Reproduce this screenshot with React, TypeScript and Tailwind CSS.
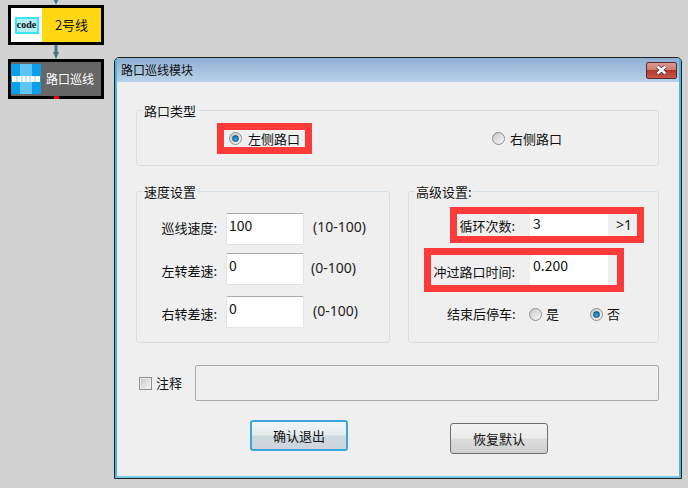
import React from "react";

const zh = { fontFamily: '"Noto Sans CJK SC", sans-serif' };

function Radio({ on }: { on?: boolean }) {
  return (
    <span className="flex h-[13px] w-[13px] shrink-0 items-center justify-center rounded-full border border-[#8f8f8f] bg-[linear-gradient(135deg,#c8c8c8,#f8f8f8)]">
      {on && <span className="h-[7px] w-[7px] rounded-full border border-[#0f4f78] bg-[radial-gradient(circle_at_50%_65%,#35b4ea,#0a5c92)]" />}
    </span>
  );
}

function Field({ v, cls }: { v: string; cls: string }) {
  return (
    <div className={`rounded-[2px] border border-[#dfe3e9] border-t-[#ababab] bg-white pl-[2px] text-[14px] leading-[22px] text-[#111] ${cls}`}>
      {v}
    </div>
  );
}

function Group({ title, cls, children }: { title: string; cls: string; children: React.ReactNode }) {
  return (
    <div className={`relative rounded-[3px] border border-[#d5dfe5] ${cls}`}>
      <span className="absolute left-[6px] top-[-8px] bg-[#efefef] px-[1px] text-[13px] leading-[16px] text-[#111]">{title}</span>
      {children}
    </div>
  );
}

function Arrow({ h }: { h: number }) {
  return (
    <svg width="10" height={h} viewBox={`0 0 10 ${h}`} className="ml-[43px] block">
      <rect x="3.5" y="0" width="3" height={h - 5} fill="#42797f" />
      <path d={`M2 ${h - 7} L8 ${h - 7} L5 ${h} Z`} fill="#42797f" />
    </svg>
  );
}

export default function App() {
  return (
    <div className="relative h-[488px] w-[688px] overflow-hidden bg-[#d1d1d1]" style={zh}>
      <div className="flex w-[96px] translate-x-[8px] flex-col">
        <Arrow h={5} />
        <div className="flex h-[40px] border-[3px] border-black">
          <div className="flex w-[31px] items-center justify-center bg-white">
            <span className="flex h-[17px] w-[24px] items-center justify-center border-2 border-[#35e6f5] bg-[#b4eef2] text-[10px] font-bold leading-none text-[#111]" style={{ fontFamily: '"Liberation Serif", serif' }}>
              code
            </span>
          </div>
          <div className="flex flex-1 items-center justify-center bg-[#ffd713] text-[13px] text-[#111]">2号线</div>
        </div>
        <Arrow h={14} />
        <div className="relative flex h-[40px] items-center border-[3px] border-black bg-[#666666]">
          <svg width="30" height="30" viewBox="0 0 30 30" className="shrink-0">
            <rect width="30" height="30" fill="#0a9fe8" />
            <rect x="9" width="12" height="30" fill="#5cc5f3" />
            <rect x="1" y="12" width="28" height="6" fill="#ffffff" />
            <path d="M6 12v6M11 12v6M15 12v6M19 12v6M24 12v6" stroke="#8fd6f6" strokeWidth="1" />
          </svg>
          <span className="ml-[5px] whitespace-nowrap text-[12px] text-white">路口巡线</span>
          <span className="absolute bottom-[-3px] left-[43px] h-[3px] w-[5px] bg-[#f00000]" />
        </div>
      </div>

      <div className="absolute left-[114px] top-[57px] h-[422px] w-[568px] rounded-t-[5px] border border-[#222]">
        <div className="flex h-full flex-col rounded-t-[4px] border-x-2 border-b-2 border-x-[#46b6e2] border-b-[#7cc4e4]">
          <div className="flex h-[24px] items-center justify-between bg-[linear-gradient(180deg,#8fafd2,#b9d1ea)] pl-[4px] pr-[2px]">
            <span className="text-[12px] text-[#111]">路口巡线模块</span>
            <span className="flex h-[17px] w-[31px] items-center justify-center rounded-[2px] border border-[#5a2a30] bg-[linear-gradient(180deg,#dc9a90_0%,#cf7a6e_45%,#b5392b_50%,#c4584a_100%)]">
              <svg width="13" height="10" viewBox="0 0 13 10">
                <path d="M2.5 1.5L10.5 8.5M10.5 1.5L2.5 8.5" stroke="#4a2a2a" strokeWidth="4" />
                <path d="M2.5 1.5L10.5 8.5M10.5 1.5L2.5 8.5" stroke="#ffffff" strokeWidth="2.5" />
              </svg>
            </span>
          </div>
          <div className="flex flex-1 flex-col bg-[#efefef] pl-[19px] pt-[28px]">
            <Group title="路口类型" cls="h-[56px] w-[523px] pl-[80px] pt-[12px]">
              <div className="flex items-start">
                <div className="flex h-[31px] w-[95px] items-center gap-[6px] border-[7px] border-[#fd3a3a] pl-[5px] text-[13px] text-[#111]">
                  <Radio on />
                  <span className="whitespace-nowrap">左侧路口</span>
                </div>
                <div className="ml-[180px] mt-[7px] flex h-[17px] items-center gap-[5px] text-[13px] text-[#111]">
                  <Radio />
                  <span className="whitespace-nowrap">右侧路口</span>
                </div>
              </div>
            </Group>

            <div className="mt-[25px] flex h-[152px] gap-[18px]">
              <Group title="速度设置" cls="w-[254px] pt-[21px]">
                <div className="flex h-[32px] items-start">
                  <span className="mt-[5px] w-[80px] text-right text-[13px] leading-[20px] text-[#111]">巡线速度:</span>
                  <Field v="100" cls="ml-[9px] h-[32px] w-[78px]" />
                  <span className="ml-[9px] mt-[4px] text-[14px] leading-[20px] text-[#222]" style={{ fontFamily: '"Noto Sans", sans-serif' }}>(10-100)</span>
                </div>
                <div className="mt-[8px] flex h-[32px] items-start">
                  <span className="mt-[8px] w-[80px] text-right text-[13px] leading-[20px] text-[#111]">左转差速:</span>
                  <Field v="0" cls="ml-[9px] h-[32px] w-[78px]" />
                  <span className="ml-[7px] mt-[5px] text-[14px] leading-[20px] text-[#222]" style={{ fontFamily: '"Noto Sans", sans-serif' }}>(0-100)</span>
                </div>
                <div className="mt-[11px] flex h-[32px] items-start">
                  <span className="mt-[8px] w-[80px] text-right text-[13px] leading-[20px] text-[#111]">右转差速:</span>
                  <Field v="0" cls="ml-[9px] h-[32px] w-[78px]" />
                  <span className="ml-[9px] mt-[5px] text-[14px] leading-[20px] text-[#222]" style={{ fontFamily: '"Noto Sans", sans-serif' }}>(0-100)</span>
                </div>
              </Group>

              <Group title="高级设置:" cls="w-[251px] pt-[15px]">
                <div className="ml-[41px] flex h-[36px] w-[194px] items-center border-[7px] border-[#fd3a3a]">
                  <span className="w-[58px] pt-[2px] text-right text-[13px] leading-[20px] text-[#111]">循环次数:</span>
                  <div className="ml-[15px] h-[22px] w-[78px] bg-white pl-[3px] text-[14px] leading-[18px] text-[#111]">3</div>
                  <span className="ml-[8px] text-[14px] leading-[22px] text-[#222]" style={{ fontFamily: '"Noto Sans", sans-serif' }}>&gt;1</span>
                </div>
                <div className="ml-[15px] mt-[5px] flex h-[44px] w-[200px] items-center border-[7px] border-[#fd3a3a]">
                  <span className="w-[84px] whitespace-nowrap pt-[3px] text-right text-[13px] leading-[20px] text-[#111]">冲过路口时间:</span>
                  <div className="ml-[15px] h-[30px] w-[78px] rounded-[2px] bg-white pl-[3px] text-[14px] leading-[20px] text-[#111]">0.200</div>
                </div>
                <div className="ml-[38px] mt-[13px] flex h-[18px] items-center text-[13px] text-[#111]">
                  <span className="w-[69px] whitespace-nowrap">结束后停车:</span>
                  <span className="ml-[13px]"><Radio /></span>
                  <span className="ml-[4px]">是</span>
                  <span className="ml-[31px]"><Radio on /></span>
                  <span className="ml-[4px]">否</span>
                </div>
              </Group>
            </div>

            <div className="mt-[22px] flex h-[36px] items-center">
              <span className="ml-[3px] h-[13px] w-[13px] border border-[#8f8f8f] bg-[linear-gradient(135deg,#c4c4c4,#f8f8f8)] outline-1 outline-offset-[-2px] outline-[#eeeeee]" />
              <span className="ml-[4px] text-[13px] text-[#111]">注释</span>
              <div className="ml-[13px] h-[36px] w-[464px] rounded-[2px] border border-[#ababab] bg-[#f0f0f0]" />
            </div>

            <div className="mt-[19px] flex items-start">
              <button className="ml-[114px] h-[31px] w-[98px] rounded-[3px] border-2 border-[#3aa6dc] bg-[linear-gradient(180deg,#f0f4f6_0%,#e6ebee_48%,#d0d9df_52%,#ccd5db_100%)] text-[13px] text-[#111]">确认退出</button>
              <button className="ml-[102px] mt-[3px] h-[31px] w-[98px] rounded-[3px] border border-[#707070] bg-[linear-gradient(180deg,#f2f2f2_0%,#ebebeb_48%,#dcdcdc_52%,#cfcfcf_100%)] text-[13px] text-[#111]">恢复默认</button>
            </div>
          </div>
        </div>
      </div>
    </div>
  );
}
